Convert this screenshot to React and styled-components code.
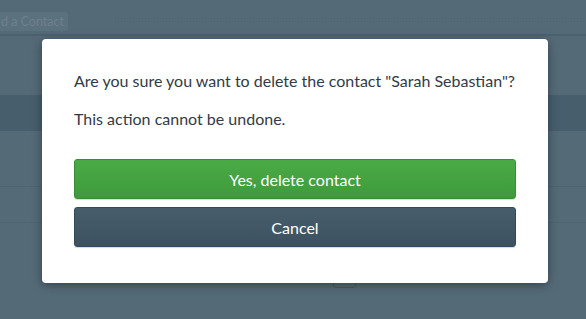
import React from "react";
import styled, { createGlobalStyle } from "styled-components";

const Global = createGlobalStyle`
  html, body { margin: 0; padding: 0; }
  body { width: 586px; height: 319px; overflow: hidden; background: #546a77; font-family: Lato, "Open Sans", sans-serif; }
  #root { position: relative; width: 586px; height: 319px; }
`;

const Page = styled.div`
  width: 586px;
  height: 319px;
  display: flex;
  flex-direction: column;
  background: #556a77;
`;

const Header = styled.div`
  height: 36px;
  display: flex;
  align-items: flex-start;
  padding-top: 12px;
  gap: 46px;
  border-bottom: 2px solid #4c6170;
  box-sizing: border-box;
`;

const GhostButton = styled.div`
  flex: none;
  height: 19px;
  padding: 0 4px 0 1px;
  border-radius: 0 3px 3px 0;
  background: #5c717e;
  color: #6d808c;
  font-size: 12.5px;
  line-height: 19px;
  white-space: nowrap;
`;

const Dots = styled.div`
  flex: 1;
  margin-top: 5px;
  height: 5px;
  background-image: radial-gradient(circle, #4f6573 0.8px, transparent 1px);
  background-size: 3px 3px;
`;

const Spacer = styled.div`
  height: ${(p) => p.$h}px;
`;

const Band = styled.div`
  height: 36px;
  background: #475e6c;
`;

const Row = styled.div`
  height: ${(p) => p.$h}px;
  border-bottom: 1px solid #4f6472;
`;

const ToolRow = styled.div`
  display: flex;
  padding-left: 333px;
`;

const SmallBox = styled.div`
  width: 23px;
  height: 14px;
  box-sizing: border-box;
  border: 1px solid #44596a;
  border-radius: 3px;
`;

const Overlay = styled.div`
  position: absolute;
  left: 42px;
  top: 39px;
`;

const Modal = styled.div`
  width: 506px;
  height: 244px;
  box-sizing: border-box;
  background: #fff;
  border-radius: 4px;
  box-shadow: 0 2px 10px rgba(20, 35, 45, 0.55);
  padding: 31px 32px 36px;
  display: flex;
  flex-direction: column;
  color: #323b46;
  font-size: 16px;
`;

const Text = styled.p`
  margin: 0;
  line-height: 22px;
  margin-top: ${(p) => p.$mt}px;
`;

const Actions = styled.div`
  margin-top: 29px;
  display: flex;
  flex-direction: column;
  gap: 8px;
`;

const Button = styled.button`
  height: 40px;
  width: 100%;
  border-radius: 3px;
  border: 1px solid ${(p) => (p.$primary ? "#3a8d36" : "#34495a")};
  background: ${(p) =>
    p.$primary
      ? "linear-gradient(#4aab46, #3f9a3b)"
      : "linear-gradient(#485d6b, #3d5261)"};
  box-shadow: 0 1px 1px rgba(0,0,0,0.15);
  color: #fff;
  font-family: Lato, "Open Sans", sans-serif;
  font-size: 16px;
  cursor: pointer;
`;

export default function App() {
  return (
    <>
      <Global />
      <Page>
        <Header>
          <GhostButton>d a Contact</GhostButton>
          <Dots />
        </Header>
        <Spacer $h={59} />
        <Band />
        <Row $h={55} />
        <Row $h={35} />
        <Spacer $h={51} />
        <ToolRow>
          <SmallBox />
        </ToolRow>
      </Page>
      <Overlay>
        <Modal>
          <Text $mt={0}>Are you sure you want to delete the contact "Sarah Sebastian"?</Text>
          <Text $mt={16}>This action cannot be undone.</Text>
          <Actions>
            <Button $primary>Yes, delete contact</Button>
            <Button>Cancel</Button>
          </Actions>
        </Modal>
      </Overlay>
    </>
  );
}
